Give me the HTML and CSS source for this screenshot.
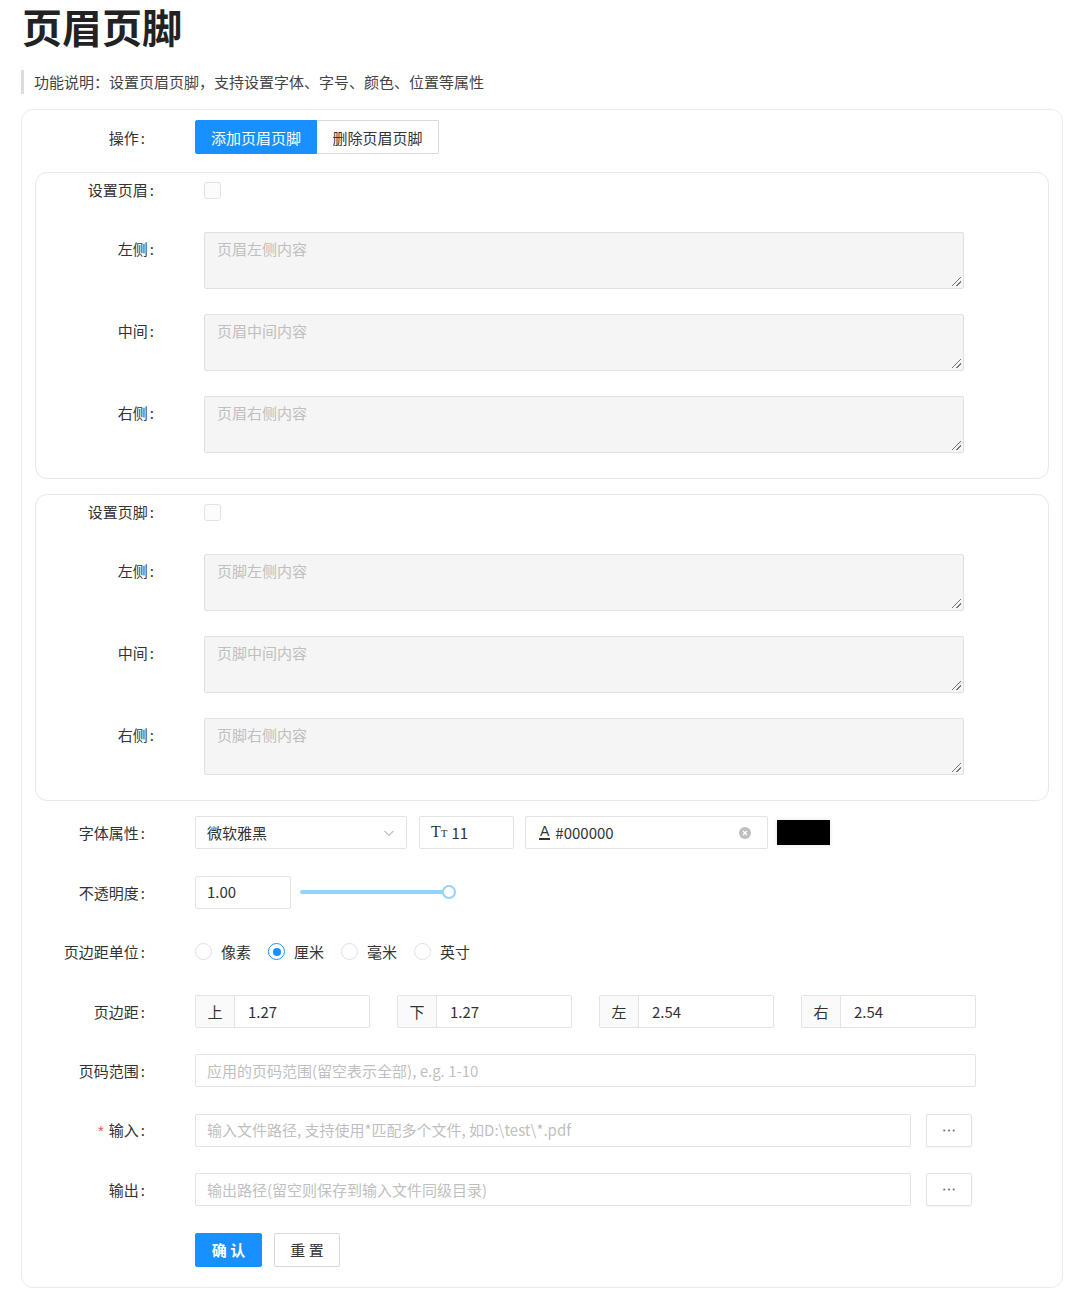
FILE: index.html
```html
<!DOCTYPE html>
<html lang="zh-CN">
<head>
<meta charset="utf-8">
<title>页眉页脚</title>
<link rel="stylesheet" href="styles.css">
</head>
<body>
<div class="page">
  <h1 class="title">页眉页脚</h1>
  <div class="desc">功能说明：设置页眉页脚，支持设置字体、字号、颜色、位置等属性</div>

  <div class="card">
    <div class="row op-row">
      <div class="label">操作<span class="colon">:</span></div>
      <div class="control">
        <div class="btn-group">
          <button class="seg active">添加页眉页脚</button>
          <button class="seg">删除页眉页脚</button>
        </div>
      </div>
    </div>

    <div class="subcard">
      <div class="srow check-row">
        <div class="slabel">设置页眉<span class="colon">:</span></div>
        <div class="scontrol"><span class="checkbox"></span></div>
      </div>
      <div class="srow">
        <div class="slabel">左侧<span class="colon">:</span></div>
        <div class="scontrol"><div class="textarea">页眉左侧内容<span class="grip"></span></div></div>
      </div>
      <div class="srow">
        <div class="slabel">中间<span class="colon">:</span></div>
        <div class="scontrol"><div class="textarea">页眉中间内容<span class="grip"></span></div></div>
      </div>
      <div class="srow">
        <div class="slabel">右侧<span class="colon">:</span></div>
        <div class="scontrol"><div class="textarea">页眉右侧内容<span class="grip"></span></div></div>
      </div>
    </div>

    <div class="subcard second">
      <div class="srow check-row">
        <div class="slabel">设置页脚<span class="colon">:</span></div>
        <div class="scontrol"><span class="checkbox"></span></div>
      </div>
      <div class="srow">
        <div class="slabel">左侧<span class="colon">:</span></div>
        <div class="scontrol"><div class="textarea">页脚左侧内容<span class="grip"></span></div></div>
      </div>
      <div class="srow">
        <div class="slabel">中间<span class="colon">:</span></div>
        <div class="scontrol"><div class="textarea">页脚中间内容<span class="grip"></span></div></div>
      </div>
      <div class="srow">
        <div class="slabel">右侧<span class="colon">:</span></div>
        <div class="scontrol"><div class="textarea">页脚右侧内容<span class="grip"></span></div></div>
      </div>
    </div>

    <div class="row font-row">
      <div class="label">字体属性<span class="colon">:</span></div>
      <div class="control">
        <div class="input select">
          <span>微软雅黑</span>
          <svg class="arrow" width="12" height="12" viewBox="0 0 12 12"><path d="M1.5 4 L6 8.5 L10.5 4" fill="none" stroke="#bfbfbf" stroke-width="1.1"/></svg>
        </div>
        <div class="input size"><span class="tt">T<small>T</small></span><span>11</span></div>
        <div class="input color">
          <span class="a-icon">A</span><span>#000000</span>
          <span class="clear"><svg width="12" height="12" viewBox="0 0 12 12"><circle cx="6" cy="6" r="6" fill="#bfbfbf"/><path d="M4 4 L8 8 M8 4 L4 8" stroke="#fff" stroke-width="1.3"/></svg></span>
        </div>
        <span class="swatch"></span>
      </div>
    </div>

    <div class="row">
      <div class="label">不透明度<span class="colon">:</span></div>
      <div class="control">
        <div class="input opacity">1.00</div>
        <div class="slider"><div class="track"></div><div class="handle"></div></div>
      </div>
    </div>

    <div class="row">
      <div class="label">页边距单位<span class="colon">:</span></div>
      <div class="control radios">
        <label class="radio"><span class="dot"></span>像素</label>
        <label class="radio on"><span class="dot"></span>厘米</label>
        <label class="radio"><span class="dot"></span>毫米</label>
        <label class="radio"><span class="dot"></span>英寸</label>
      </div>
    </div>

    <div class="row">
      <div class="label">页边距<span class="colon">:</span></div>
      <div class="control margins">
        <div class="group"><span class="addon">上</span><span class="gval">1.27</span></div>
        <div class="group"><span class="addon">下</span><span class="gval">1.27</span></div>
        <div class="group"><span class="addon">左</span><span class="gval">2.54</span></div>
        <div class="group"><span class="addon">右</span><span class="gval">2.54</span></div>
      </div>
    </div>

    <div class="row">
      <div class="label">页码范围<span class="colon">:</span></div>
      <div class="control">
        <div class="input wide ph">应用的页码范围(留空表示全部), e.g. 1-10</div>
      </div>
    </div>

    <div class="row">
      <div class="label"><span class="req">*</span>输入<span class="colon">:</span></div>
      <div class="control">
        <div class="input path ph">输入文件路径, 支持使用*匹配多个文件, 如D:\test\*.pdf</div>
        <button class="more"><svg width="12" height="3" viewBox="0 0 12 3"><circle cx="1.3" cy="1.5" r="1.1" fill="#777"/><circle cx="6" cy="1.5" r="1.1" fill="#777"/><circle cx="10.7" cy="1.5" r="1.1" fill="#777"/></svg></button>
      </div>
    </div>

    <div class="row">
      <div class="label">输出<span class="colon">:</span></div>
      <div class="control">
        <div class="input path ph">输出路径(留空则保存到输入文件同级目录)</div>
        <button class="more"><svg width="12" height="3" viewBox="0 0 12 3"><circle cx="1.3" cy="1.5" r="1.1" fill="#777"/><circle cx="6" cy="1.5" r="1.1" fill="#777"/><circle cx="10.7" cy="1.5" r="1.1" fill="#777"/></svg></button>
      </div>
    </div>

    <div class="row last">
      <div class="label"></div>
      <div class="control">
        <button class="btn primary">确 认</button>
        <button class="btn">重 置</button>
      </div>
    </div>
  </div>
</div>
</body>
</html>
```

FILE: styles.css
```css
* { box-sizing: border-box; }
body {
  margin: 0;
  background: #fff;
  font-family: "Noto Sans CJK SC", "Noto Sans", sans-serif;
  font-size: 15px;
  color: #333;
}
.page { padding: 0 17px 0 21px; }
.title {
  margin: 0 0 0 1px;
  font-size: 40px;
  line-height: 52px;
  font-weight: 700;
  color: #222;
}
.desc {
  margin-top: 18px;
  border-left: 3px solid #ddd;
  padding-left: 10px;
  line-height: 24px;
  font-size: 15px;
  color: #444;
}
.card {
  margin-top: 15px;
  width: 1042px;
  border: 1px solid #ebebeb;
  border-radius: 12px;
  padding: 10px 0 20px 0;
}
.row {
  display: flex;
  align-items: center;
  height: 33px;
  margin-bottom: 26.5px;
}
.row.last { margin-bottom: 0; height: 34px; }
.op-row { height: 34px; margin-bottom: 18px; }
.label {
  width: 123px;
  text-align: right;
  line-height: 33px;
  color: #333;
  white-space: nowrap;
}
.colon { margin-left: 2px; }
.control {
  margin-left: 50px;
  display: flex;
  align-items: center;
}
.btn-group { display: flex; }
.seg {
  height: 34px;
  width: 122px;
  border: 1px solid #d9d9d9;
  background: #fff;
  font: inherit;
  color: #333;
  padding: 0;
}
.seg:first-child { border-radius: 2px 0 0 2px; }
.seg:last-child { border-left: none; border-radius: 0 2px 2px 0; }
.seg.active { background: #1890ff; border-color: #1890ff; color: #fff; }

.subcard {
  margin: 0 13px 0 13px;
  border: 1px solid #e8e8e8;
  border-radius: 12px;
  padding: 0 0 25px 0;
}
.subcard.second { margin-top: 15px; margin-bottom: 15px; }
.srow { display: flex; align-items: flex-start; margin-bottom: 25px; }
.srow:last-child { margin-bottom: 0; }
.check-row { height: 34px; align-items: center; }
.slabel {
  width: 118px;
  text-align: right;
  line-height: 34px;
  white-space: nowrap;
}
.scontrol { margin-left: 50px; display: flex; align-items: center; }
.checkbox {
  display: block;
  width: 17px;
  height: 17px;
  border: 1px solid #e2e2e2;
  border-radius: 3px;
  background: #fcfcfc;
}
.textarea {
  position: relative;
  width: 760px;
  height: 57px;
  background: #f5f5f5;
  border: 1px solid #e0e0e0;
  border-radius: 2px;
  padding: 5px 12px;
  line-height: 22px;
  color: #bfbfbf;
}
.grip {
  position: absolute;
  right: 2px;
  bottom: 2px;
  width: 9px;
  height: 9px;
  background: linear-gradient(135deg, transparent 45%, #777 45%, #777 55%, transparent 55%, transparent 72%, #777 72%, #777 82%, transparent 82%);
}

.input {
  height: 33px;
  border: 1px solid #e3e3e3;
  border-radius: 2px;
  padding: 0 11px;
  display: flex;
  align-items: center;
  line-height: 22px;
  color: #333;
  background: #fff;
  white-space: nowrap;
}
.input.ph { color: #bfbfbf; }
.select { width: 212px; justify-content: space-between; padding-right: 11px; }
.size { width: 95px; margin-left: 12px; gap: 4px; }
.tt { font-family: "Liberation Serif", serif; font-size: 16px; color: #333; }
.tt small { font-size: 11px; }
.color { width: 243px; margin-left: 11px; position: relative; padding-left: 13px; }
.a-icon {
  font-family: "Liberation Sans", sans-serif;
  font-size: 14px;
  border-bottom: 2px solid #333;
  line-height: 13px;
  margin-right: 5px;
  padding: 0 1px;
}
.clear { position: absolute; right: 16px; top: 10px; display: flex; }
.swatch {
  display: block;
  width: 53px;
  height: 25px;
  margin-left: 9px;
  background: #000;
  box-shadow: 0 0 4px rgba(0,0,0,0.12);
}
.opacity { width: 96px; }
.slider { position: relative; width: 156px; height: 14px; margin-left: 9px; }
.track {
  position: absolute;
  left: 0; right: 7px; top: 5px;
  height: 4px;
  border-radius: 2px;
  background: #91d5ff;
}
.handle {
  position: absolute;
  right: 0; top: 0;
  width: 14px; height: 14px;
  border-radius: 50%;
  border: 2px solid #91d5ff;
  background: #fff;
}
.radio { display: flex; align-items: center; margin-right: 17px; color: #333; }
.dot {
  display: block;
  width: 17px; height: 17px;
  border: 1px solid #e0e0e0;
  border-radius: 50%;
  margin-right: 9px;
  position: relative;
}
.radio.on .dot { border-color: #1890ff; }
.radio.on .dot::after {
  content: "";
  position: absolute;
  left: 3.5px; top: 3.5px;
  width: 8px; height: 8px;
  border-radius: 50%;
  background: #1890ff;
}
.margins { display: grid; grid-template-columns: repeat(4, 175px); column-gap: 27px; }
.group {
  display: flex;
  height: 33px;
  border: 1px solid #e3e3e3;
  border-radius: 2px;
}
.addon {
  width: 39px;
  background: #fafafa;
  border-right: 1px solid #e3e3e3;
  display: flex;
  align-items: center;
  justify-content: center;
}
.gval { display: flex; align-items: center; padding-left: 13px; }
.wide { width: 781px; }
.path { width: 716px; }
.more {
  margin-left: 15px;
  width: 46px;
  height: 33px;
  border: 1px solid #e3e3e3;
  border-radius: 2px;
  background: #fff;
  display: flex;
  align-items: center;
  justify-content: center;
  padding: 0;
  box-shadow: 0 1px 2px rgba(0,0,0,0.04);
}
.req { color: #ff4d4f; margin-right: 5px; font-family: "Liberation Sans", sans-serif; }
.btn {
  height: 34px;
  width: 66px;
  border: 1px solid #d9d9d9;
  border-radius: 2px;
  background: #fff;
  font: inherit;
  font-size: 15px;
  color: #333;
  padding: 0;
  margin-right: 12px;
}
.btn.primary { width: 67px; background: #1890ff; border-color: #1890ff; color: #fff; font-weight: 700; }
```
